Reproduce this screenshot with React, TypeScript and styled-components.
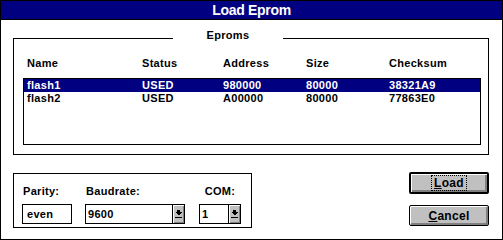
import React from 'react'
import styled, { createGlobalStyle } from 'styled-components'

// __________
//
type Eprom = {
  name: string
  status: string
  address: string
  size: string
  checksum: string
}

const eproms: Eprom[] = [
  { name: 'flash1', status: 'USED', address: '980000', size: '80000', checksum: '38321A9' },
  { name: 'flash2', status: 'USED', address: 'A00000', size: '80000', checksum: '77863E0' },
]

const DownArrow: React.VFC = () => (
  <svg width="7" height="9" viewBox="0 0 7 9" shapeRendering="crispEdges">
    <rect x="2" y="0" width="3" height="2" fill="#000" />
    <polygon points="0,2 7,2 3.5,5.5" fill="#000" />
    <rect x="0" y="7" width="7" height="1" fill="#000" />
  </svg>
)

// __________
//
const App: React.VFC = () => {
  const selected = 0

  return (
    <>
      <GlobalStyle />
      <Window>
        <TitleBar>Load Eprom</TitleBar>
        <Body>
          <Group>
            <GroupLabel>Eproms</GroupLabel>
            <Columns>
              <div>Name</div>
              <div>Status</div>
              <div>Address</div>
              <div>Size</div>
              <div>Checksum</div>
            </Columns>
            <ListBox>
              {eproms.map((e, i) => (
                <Row key={e.name} selected={i === selected}>
                  <div>{e.name}</div>
                  <div>{e.status}</div>
                  <div>{e.address}</div>
                  <div>{e.size}</div>
                  <div>{e.checksum}</div>
                </Row>
              ))}
            </ListBox>
          </Group>

          <BottomRow>
            <ParamsGroup>
              <Field width={50}>
                <Label>Parity:</Label>
                <Edit>even</Edit>
              </Field>
              <Field width={100} gap={13}>
                <Label>Baudrate:</Label>
                <Combo>
                  <ComboText>9600</ComboText>
                  <ComboButton>
                    <DownArrow />
                  </ComboButton>
                </Combo>
              </Field>
              <Field width={42} gap={14}>
                <Label center>COM:</Label>
                <Combo>
                  <ComboText>1</ComboText>
                  <ComboButton>
                    <DownArrow />
                  </ComboButton>
                </Combo>
              </Field>
            </ParamsGroup>

            <Buttons>
              <PushButton isDefault>
                <FocusRect>
                  <u>L</u>oad
                </FocusRect>
              </PushButton>
              <PushButton>
                <u>C</u>ancel
              </PushButton>
            </Buttons>
          </BottomRow>
        </Body>
      </Window>
    </>
  )
}

// __________
//
const GlobalStyle = createGlobalStyle`
  html, body {
    margin: 0;
    padding: 0;
    background: #fff;
  }
  body {
    font-family: "Liberation Sans", Arial, sans-serif;
    font-weight: bold;
    font-size: 11px;
    letter-spacing: 0.3px;
    color: #000;
  }
`

const Window = styled.div`
  width: 503px;
  height: 240px;
  box-sizing: border-box;
  border: 1px solid #000;
  background: #fff;
  display: flex;
  flex-direction: column;
`

const TitleBar = styled.div`
  height: 17px;
  padding-top: 1px;
  line-height: 17px;
  border-bottom: 1px solid #000;
  background: #000080;
  color: #fff;
  text-align: center;
  font-size: 14px;
  letter-spacing: -0.3px;
`

const Body = styled.div`
  padding: 18px 13px 0 12px;
  display: flex;
  flex-direction: column;
`

const Group = styled.div`
  position: relative;
  height: 117px;
  box-sizing: border-box;
  border: 1px solid #000;
  padding: 18px 7px 9px 9px;
`

const GroupLabel = styled.div`
  position: absolute;
  top: -10px;
  left: 159px;
  width: 110px;
  line-height: 13px;
  text-align: center;
  background: #fff;
`

const Columns = styled.div`
  display: grid;
  grid-template-columns: 115px 81px 83px 83px 1fr;
  height: 13px;
  line-height: 13px;
  padding-left: 4px;
`

const ListBox = styled.div`
  margin-top: 8px;
  height: 67px;
  box-sizing: border-box;
  border: 1px solid #000;
`

const Row = styled(Columns)<{ selected?: boolean }>`
  padding-left: 3px;
  background: ${(p) => (p.selected ? '#000080' : 'transparent')};
  color: ${(p) => (p.selected ? '#fff' : '#000')};
`

const BottomRow = styled.div`
  display: flex;
  align-items: flex-start;
  margin-top: 17px;
`

const ParamsGroup = styled.div`
  margin-top: 1px;
  width: 239px;
  height: 55px;
  box-sizing: border-box;
  border: 1px solid #000;
  padding: 11px 0 0 8px;
  display: flex;
`

const Field = styled.div<{ width: number; gap?: number }>`
  width: ${(p) => p.width}px;
  margin-left: ${(p) => p.gap ?? 0}px;
  display: flex;
  flex-direction: column;
  gap: 6px;
`

const Label = styled.div<{ center?: boolean }>`
  line-height: 13px;
  padding-left: ${(p) => (p.center ? 0 : 1)}px;
  text-align: ${(p) => (p.center ? 'center' : 'left')};
`

const Edit = styled.div`
  height: 20px;
  box-sizing: border-box;
  border: 1px solid #000;
  padding-left: 4px;
  line-height: 18px;
`

const Combo = styled.div`
  height: 20px;
  box-sizing: border-box;
  border: 1px solid #000;
  display: flex;
`

const ComboText = styled.div`
  flex: 1;
  padding-left: 2px;
  line-height: 18px;
`

const ComboButton = styled.div`
  width: 12px;
  box-sizing: border-box;
  border-left: 1px solid #000;
  background: #c0c0c0;
  box-shadow: inset 1px 1px #fff, inset -1px -1px #808080;
  display: flex;
  align-items: center;
  justify-content: center;
`

const Buttons = styled.div`
  margin-left: auto;
  width: 80px;
  display: flex;
  flex-direction: column;
  gap: 11px;
`

const PushButton = styled.div<{ isDefault?: boolean }>`
  height: ${(p) => (p.isDefault ? 22 : 21)}px;
  box-sizing: border-box;
  border: ${(p) => (p.isDefault ? 2 : 1)}px solid #000;
  border-radius: 2px;
  background: #c0c0c0;
  box-shadow: inset 1px 1px #fff, inset -2px -2px #808080;
  display: flex;
  align-items: center;
  justify-content: center;
  font-size: 12px;
`

const FocusRect = styled.span`
  padding: 0 2px;
  line-height: 14px;
  outline: 1px dotted #000;
`

export default App
